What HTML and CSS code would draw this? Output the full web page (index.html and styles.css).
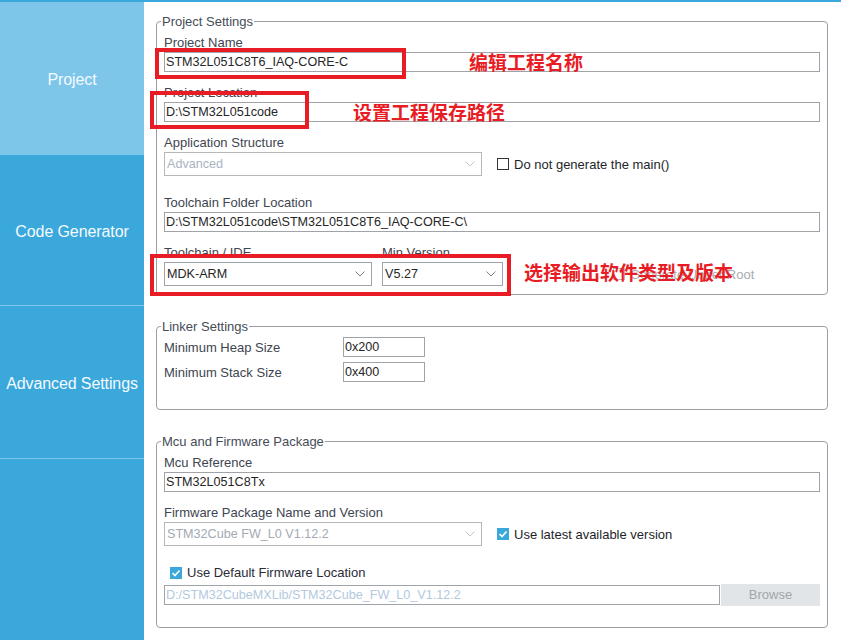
FILE: index.html
```html
<!DOCTYPE html>
<html lang="en">
  <head>
    <meta charset="UTF-8">
    <title>Project Manager</title>
    <link rel="stylesheet" href="styles.css">
  </head>

  <body>
    <div class="topbar"></div>
    <div class="layout">
      <nav class="sidebar">
        <div class="tab tab-first active">Project</div>
        <div class="tab">Code Generator</div>
        <div class="tab tab-last">Advanced Settings</div>
      </nav>

      <main class="content">
        <fieldset class="group group-project">
          <legend>Project Settings</legend>

          <div class="field">
            <label>Project Name</label>
            <div class="input">STM32L051C8T6_IAQ-CORE-C</div>
          </div>

          <div class="field">
            <label>Project Location</label>
            <div class="input">D:\STM32L051code</div>
          </div>

          <div class="field">
            <label>Application Structure</label>
            <div class="row">
              <div class="select select-wide disabled">
                <span>Advanced</span>
                <svg class="chev" viewBox="0 0 10 6"><polyline points="0.5,0.5 5,5 9.5,0.5"/></svg>
              </div>
              <div class="check-item">
                <span class="check"></span>
                <span>Do not generate the main()</span>
              </div>
            </div>
          </div>

          <div class="field field-loose">
            <label>Toolchain Folder Location</label>
            <div class="input">D:\STM32L051code\STM32L051C8T6_IAQ-CORE-C\</div>
          </div>

          <div class="field">
            <div class="row row-bottom">
              <div class="col col-ide">
                <label>Toolchain / IDE</label>
                <div class="select">
                  <span>MDK-ARM</span>
                  <svg class="chev dark" viewBox="0 0 10 6"><polyline points="0.5,0.5 5,5 9.5,0.5"/></svg>
                </div>
              </div>
              <div class="col col-ver">
                <label>Min Version</label>
                <div class="select">
                  <span>V5.27</span>
                  <svg class="chev dark" viewBox="0 0 10 6"><polyline points="0.5,0.5 5,5 9.5,0.5"/></svg>
                </div>
              </div>
              <div class="check-item check-root muted">
                <span class="check check-muted"></span>
                <span>Generate Under Root</span>
              </div>
            </div>
          </div>
        </fieldset>

        <fieldset class="group group-linker">
          <legend>Linker Settings</legend>
          <div class="linker-grid">
            <label>Minimum Heap Size</label>
            <div class="input">0x200</div>
            <label>Minimum Stack Size</label>
            <div class="input">0x400</div>
          </div>
        </fieldset>

        <fieldset class="group group-mcu">
          <legend>Mcu and Firmware Package</legend>

          <div class="field">
            <label>Mcu Reference</label>
            <div class="input">STM32L051C8Tx</div>
          </div>

          <div class="field">
            <label>Firmware Package Name and Version</label>
            <div class="row">
              <div class="select select-wide disabled grey">
                <span>STM32Cube FW_L0 V1.12.2</span>
                <svg class="chev" viewBox="0 0 10 6"><polyline points="0.5,0.5 5,5 9.5,0.5"/></svg>
              </div>
              <div class="check-item">
                <span class="check checked">
                  <svg viewBox="0 0 12 12"><polyline points="2.5,6 5,8.5 9.5,3.5"/></svg>
                </span>
                <span>Use latest available version</span>
              </div>
            </div>
          </div>

          <div class="check-item check-default">
            <span class="check checked">
              <svg viewBox="0 0 12 12"><polyline points="2.5,6 5,8.5 9.5,3.5"/></svg>
            </span>
            <span>Use Default Firmware Location</span>
          </div>

          <div class="row browse-row">
            <div class="input input-path">D:/STM32CubeMXLib/STM32Cube_FW_L0_V1.12.2</div>
            <div class="btn">Browse</div>
          </div>
        </fieldset>

        <!-- red notes drawn over the dialog -->
        <div class="mark mark-name"></div>
        <div class="mark mark-loc"></div>
        <div class="mark mark-tool"></div>
        <div class="note note-name">编辑工程名称</div>
        <div class="note note-loc">设置工程保存路径</div>
        <div class="note note-tool">选择输出软件类型及版本</div>
      </main>
    </div>
  </body>
</html>
```

FILE: styles.css
```css
* {
  margin: 0;
  padding: 0;
  box-sizing: border-box;
}

body {
  width: 841px;
  height: 640px;
  overflow: hidden;
  background-color: white;
  font-family: "Liberation Sans", Arial, sans-serif;
  font-size: 13px;
  color: #3e4550;
}

.topbar {
  height: 2px;
  background-color: #3ba8db;
}

.layout {
  display: flex;
  height: 638px;
}

.sidebar {
  width: 144px;
  flex-shrink: 0;
  background-color: #3ba8db;
}

.tab {
  height: 151px;
  padding-top: 3px;
  border-bottom: 1px solid #7ec5ea;
  display: flex;
  align-items: center;
  justify-content: center;
  color: #f4faff;
  font-size: 16px;
  letter-spacing: -0.1px;
  white-space: nowrap;
}

.tab-first {
  height: 153px;
}

.tab-last {
  height: 153px;
}

.tab.active {
  background-color: #7dc5e9;
}

.content {
  flex: 1;
  position: relative;
  padding: 12px 13px 0 12px;
}

/* fieldsets */
.group {
  border: 1px solid #9b9fa4;
  border-radius: 4px;
  padding: 6px 7px 8px 7px;
  margin-bottom: 24px;
}

.group legend {
  margin-left: -3px;
  padding: 0 1px;
  line-height: 15px;
  color: #464c56;
}

.group-linker {
  padding: 3px 7px 27px 7px;
}

.group-mcu {
  padding-bottom: 21px;
}

label {
  display: block;
  line-height: 15px;
  margin-bottom: 2px;
}

.field + .field {
  margin-top: 13px;
}

.field.field-loose {
  margin-top: 19px;
}

.row {
  display: flex;
  align-items: center;
}

.row-bottom {
  align-items: flex-end;
}

/* inputs */
.input {
  height: 20px;
  border: 1px solid #a0a3a7;
  padding: 0 1px;
  font-size: 12.6px;
  line-height: 18px;
  color: #262626;
  white-space: nowrap;
  overflow: hidden;
}

.select {
  height: 24px;
  border: 1px solid #a0a3a7;
  display: flex;
  align-items: center;
  justify-content: space-between;
  padding: 0 6px 0 2px;
  font-size: 12.6px;
  color: #262626;
}

.select-wide {
  width: 318px;
}

.select.disabled {
  color: #a7b4c4;
  border-color: #b4b8bc;
}

.select.grey {
  color: #a3aab3;
}

.chev {
  width: 10px;
  height: 6px;
  fill: none;
  stroke: #c2c6ca;
  stroke-width: 1;
}

.chev.dark {
  stroke: #7d8288;
}

.col-ide {
  width: 208px;
}

.col-ver {
  width: 121px;
  margin-left: 10px;
}

/* checkboxes */
.check-item {
  display: flex;
  align-items: center;
  color: #1e1f2a;
  line-height: 15px;
}

.row .check-item {
  margin-left: 15px;
}

.check {
  width: 12px;
  height: 12px;
  border: 1px solid #333;
  background-color: white;
  margin-right: 5px;
  flex-shrink: 0;
}

.check.checked {
  border: none;
  background-color: #3ba8db;
}

.check svg {
  display: block;
  width: 12px;
  height: 12px;
  fill: none;
  stroke: white;
  stroke-width: 1.6;
}

.row .check-root {
  margin-left: 110px;
  height: 24px;
}

.check-root.muted {
  color: #a9abae;
}

.check-muted {
  border-color: #b5b7ba;
}

.check-default {
  margin: 19px 0 0 6px;
  color: #2a2c38;
}

.browse-row {
  margin-top: 4px;
}

.input-path {
  width: 556px;
  color: #b3c9e0;
}

.btn {
  width: 99px;
  height: 22px;
  margin-left: 1px;
  background-color: #e2e5e8;
  color: #a0a5ab;
  text-align: center;
  line-height: 22px;
}

/* linker */
.linker-grid {
  display: grid;
  grid-template-columns: 179px 82px;
  row-gap: 5px;
  align-items: center;
}

.linker-grid label {
  margin-bottom: 0;
}

/* annotations */
.mark {
  position: absolute;
  border: 4px solid #e81c24;
}

.mark-name {
  left: 11px;
  top: 46px;
  width: 251px;
  height: 31px;
}

.mark-loc {
  left: 6px;
  top: 89px;
  width: 159px;
  height: 38px;
}

.mark-tool {
  left: 6px;
  top: 252px;
  width: 361px;
  height: 42px;
}

.note {
  position: absolute;
  font-family: "Noto Sans CJK SC", sans-serif;
  font-weight: bold;
  font-size: 19px;
  line-height: 19px;
  color: #e81c24;
  white-space: nowrap;
}

.note-name {
  left: 325px;
  top: 50px;
}

.note-loc {
  left: 209px;
  top: 100px;
}

.note-tool {
  left: 380px;
  top: 260px;
}
```
